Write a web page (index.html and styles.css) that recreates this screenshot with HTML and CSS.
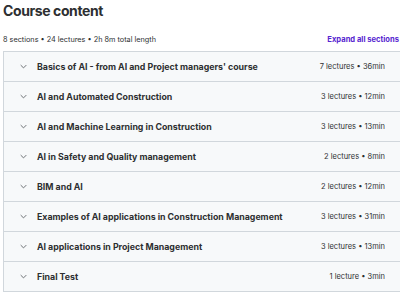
FILE: index.html
```html
<!DOCTYPE html>
<html lang="en">
<head>
  <meta charset="UTF-8" />
  <meta name="viewport" content="width=device-width, initial-scale=1.0"/>
  <title>Course content</title>
  <link rel="stylesheet" href="styles.css">
</head>
<body>
  <div class="curriculum">
    <h2>Course content</h2>
    <div class="summary">
      <span>8 sections • 24 lectures • 2h 8m total length</span>
      <button class="expand">Expand all sections</button>
    </div>
    <div class="sections">
      <div class="section">
        <span class="chev"><svg viewBox="0 0 10 6" width="7" height="5"><path d="M1 1l4 4 4-4" fill="none" stroke="#6a6f73" stroke-width="1.4"/></svg></span>
        <span class="title">Basics of AI - from AI and Project managers' course</span>
        <span class="meta">7 lectures • 36min</span>
      </div>
      <div class="section">
        <span class="chev"><svg viewBox="0 0 10 6" width="7" height="5"><path d="M1 1l4 4 4-4" fill="none" stroke="#6a6f73" stroke-width="1.4"/></svg></span>
        <span class="title">AI and Automated Construction</span>
        <span class="meta">3 lectures • 12min</span>
      </div>
      <div class="section">
        <span class="chev"><svg viewBox="0 0 10 6" width="7" height="5"><path d="M1 1l4 4 4-4" fill="none" stroke="#6a6f73" stroke-width="1.4"/></svg></span>
        <span class="title">AI and Machine Learning in Construction</span>
        <span class="meta">3 lectures • 13min</span>
      </div>
      <div class="section">
        <span class="chev"><svg viewBox="0 0 10 6" width="7" height="5"><path d="M1 1l4 4 4-4" fill="none" stroke="#6a6f73" stroke-width="1.4"/></svg></span>
        <span class="title">AI in Safety and Quality management</span>
        <span class="meta">2 lectures • 8min</span>
      </div>
      <div class="section">
        <span class="chev"><svg viewBox="0 0 10 6" width="7" height="5"><path d="M1 1l4 4 4-4" fill="none" stroke="#6a6f73" stroke-width="1.4"/></svg></span>
        <span class="title">BIM and AI</span>
        <span class="meta">2 lectures • 12min</span>
      </div>
      <div class="section">
        <span class="chev"><svg viewBox="0 0 10 6" width="7" height="5"><path d="M1 1l4 4 4-4" fill="none" stroke="#6a6f73" stroke-width="1.4"/></svg></span>
        <span class="title">Examples of AI applications in Construction Management</span>
        <span class="meta">3 lectures • 31min</span>
      </div>
      <div class="section">
        <span class="chev"><svg viewBox="0 0 10 6" width="7" height="5"><path d="M1 1l4 4 4-4" fill="none" stroke="#6a6f73" stroke-width="1.4"/></svg></span>
        <span class="title">AI applications in Project Management</span>
        <span class="meta">3 lectures • 13min</span>
      </div>
      <div class="section">
        <span class="chev"><svg viewBox="0 0 10 6" width="7" height="5"><path d="M1 1l4 4 4-4" fill="none" stroke="#6a6f73" stroke-width="1.4"/></svg></span>
        <span class="title">Final Test</span>
        <span class="meta">1 lecture • 3min</span>
      </div>
    </div>
  </div>
</body>
</html>
```

FILE: styles.css
```css
body {
  font-family: 'Inter', 'Liberation Sans', sans-serif;
  background: #fff;
  color: #2d2f31;
  margin: 0;
  padding: 0 0 0 3px;
  overflow: hidden;
}
.curriculum {
  width: 400px;
}
h2 {
  font-size: 14px;
  font-weight: 700;
  letter-spacing: -0.4px;
  margin: 0;
  padding-top: 3px;
  line-height: 16px;
}
.summary {
  display: flex;
  justify-content: space-between;
  align-items: center;
  margin-top: 14px;
  height: 12px;
  padding-right: 4px;
  font-size: 7.3px;
  color: #2d2f31;
}
.expand {
  background: none;
  border: none;
  padding: 0;
  font-family: inherit;
  font-size: 7.6px;
  font-weight: 700;
  color: #5624d0;
  cursor: pointer;
}
.sections {
  margin-top: 6px;
  border: 1px solid #d1d7dc;
  border-right: none;
}
.section {
  display: flex;
  align-items: center;
  height: 29px;
  padding: 0 18px 0 16px;
  background: #f7f9fa;
  border-bottom: 1px solid #d1d7dc;
}
.section:last-child {
  border-bottom: none;
}
.chev {
  width: 17px;
  display: flex;
  align-items: center;
}
.title {
  flex: 1;
  font-size: 8.8px;
  font-weight: 700;
}
.meta {
  font-size: 7.5px;
  color: #2d2f31;
}
```
